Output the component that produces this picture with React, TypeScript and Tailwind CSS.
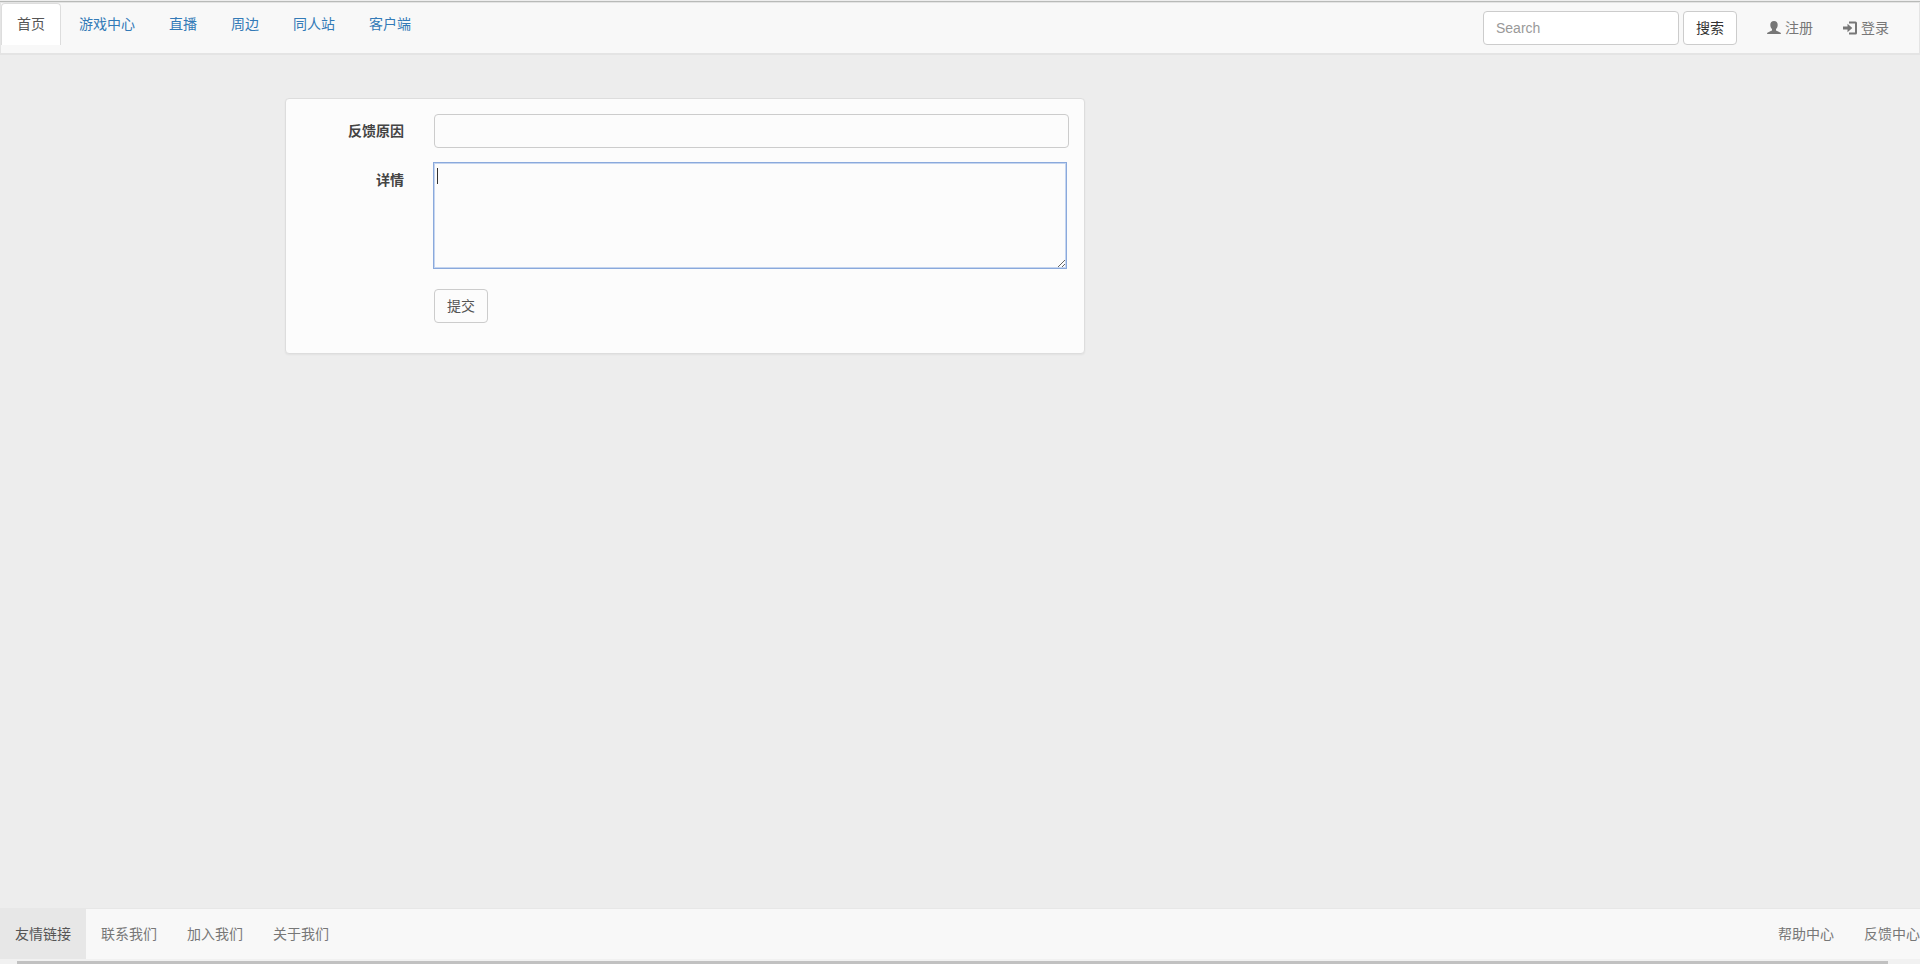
const tabs = ['游戏中心', '直播', '周边', '同人站', '客户端'];
const footerLinks = ['联系我们', '加入我们', '关于我们'];

const UserIcon = () => (
  <svg viewBox="0 0 14 14" className="w-3.5 h-3.5" fill="currentColor" aria-hidden="true">
    <path d="M7 0C4.700 0 3.300 1.500 3.300 3.700c0 1.700.6 3.300 1.700 4.300v1.300c-.4.600-1.400.9-2.600 1.400C1 11.200 0 11.700 0 13h14c0-1.300-1-1.800-2.400-2.300C10.400 10.200 9.400 9.900 9 9.300V8c1.100-1 1.700-2.600 1.700-4.300C10.700 1.500 9.300 0 7 0z" />
  </svg>
);

const LoginIcon = () => (
  <svg viewBox="0 0 14 14" className="w-3.5 h-3.5" fill="currentColor" aria-hidden="true">
    <path d="M6 0.500h6.500a1.500 1.500 0 0 1 1.500 1.500v10a1.500 1.500 0 0 1-1.500 1.500H6v-2h6v-9H6z" />
    <path d="M4.500 2.800 9.300 7 4.500 11.200V8.500H0V5.500h4.500z" />
  </svg>
);

const Navbar = () => (
  <header className="flex items-start justify-between h-[53px] border border-b-2 border-[#e4e4e4] bg-[#f8f8f8]">
    <nav className="flex gap-0.5">
      <a href="#" className="px-[15px] py-2.5 h-[42px] border border-b-0 border-[#ddd] rounded-t bg-white text-[#555]">
        首页
      </a>
      {tabs.map((tab) => (
        <a key={tab} href="#" className="px-[15px] py-2.5 border border-transparent text-[#337ab7]">
          {tab}
        </a>
      ))}
    </nav>

    <div className="flex items-center pr-[15px] h-[50px]">
      <form className="flex gap-1 mr-[15px]">
        <input
          type="text"
          placeholder="Search"
          aria-label="Search"
          className="w-[196px] h-[34px] px-3 border border-[#ccc] rounded bg-white placeholder:text-[#999] outline-none"
        />
        <button type="button" className="h-[34px] px-3 border border-[#ccc] rounded bg-white text-[#333]">
          搜索
        </button>
      </form>
      <a href="#" className="flex items-center gap-1 px-[15px]">
        <UserIcon />
        注册
      </a>
      <a href="#" className="flex items-center gap-1 px-[15px]">
        <LoginIcon />
        登录
      </a>
    </div>
  </header>
);

const FeedbackForm = () => (
  <form className="w-5/12 ml-[285px] mt-[43px] pt-[15px] pb-[30px] border border-[#ddd] rounded bg-[#fcfcfc] shadow-xs text-[#444]">
    <div className="flex mb-3.5">
      <label htmlFor="reason" className="w-1/6 pr-[15px] pt-[7px] text-right font-bold">
        反馈原因
      </label>
      <div className="flex-1 px-[15px]">
        <input
          id="reason"
          type="text"
          className="block w-full h-[34px] px-3 border border-[#ccc] rounded bg-[#fcfcfc] outline-none"
        />
      </div>
    </div>
    <div className="flex mb-5">
      <label htmlFor="detail" className="w-1/6 pr-[15px] pt-2 text-right font-bold">
        详情
      </label>
      <div className="relative flex-1 pl-3.5 pr-[17px]">
        <textarea
          id="detail"
          className="block w-full h-[107px] px-1 py-0.5 border border-[#8aa9dc] bg-[#fcfcfc] outline outline-[#c5d5ef] -outline-offset-2 resize"
        />
        {/* text cursor */}
        <span className="absolute left-[18px] top-1.5 w-px h-4 bg-[#333]" />
      </div>
    </div>
    <div className="flex">
      <div className="w-1/6" />
      <div className="px-[15px]">
        <button type="button" className="h-[34px] px-3 border border-[#ccc] rounded bg-[#fcfcfc] text-[#555]">
          提交
        </button>
      </div>
    </div>
  </form>
);

const Footer = () => (
  <footer className="flex justify-between h-[51px] border-t border-[#e7e7e7] bg-[#f8f8f8]">
    <nav className="flex">
      <a href="#" className="px-[15px] py-[15px] bg-[#e7e7e7] text-[#555]">
        友情链接
      </a>
      {footerLinks.map((link) => (
        <a key={link} href="#" className="px-[15px] py-[15px]">
          {link}
        </a>
      ))}
    </nav>
    <nav className="flex gap-[30px] py-[15px]">
      <a href="#">帮助中心</a>
      <a href="#">反馈中心</a>
    </nav>
  </footer>
);

const App = () => {
  return (
    <div className="min-h-screen flex flex-col bg-[#ededed] text-sm leading-5 text-[#777] font-['Liberation_Sans','Noto_Sans_CJK_SC',sans-serif]">
      <div className="h-0.5 border-b border-[#b8bab8] bg-[#eee]" />
      <Navbar />
      <main className="flex-1">
        <FeedbackForm />
      </main>
      <Footer />
      {/* horizontal scroll strip */}
      <div className="h-[5px] pt-0.5 pl-[17px] pr-8 bg-[#f1f1f1]">
        <div className="h-full bg-[#c1c1c1]" />
      </div>
    </div>
  );
};

export default App;
